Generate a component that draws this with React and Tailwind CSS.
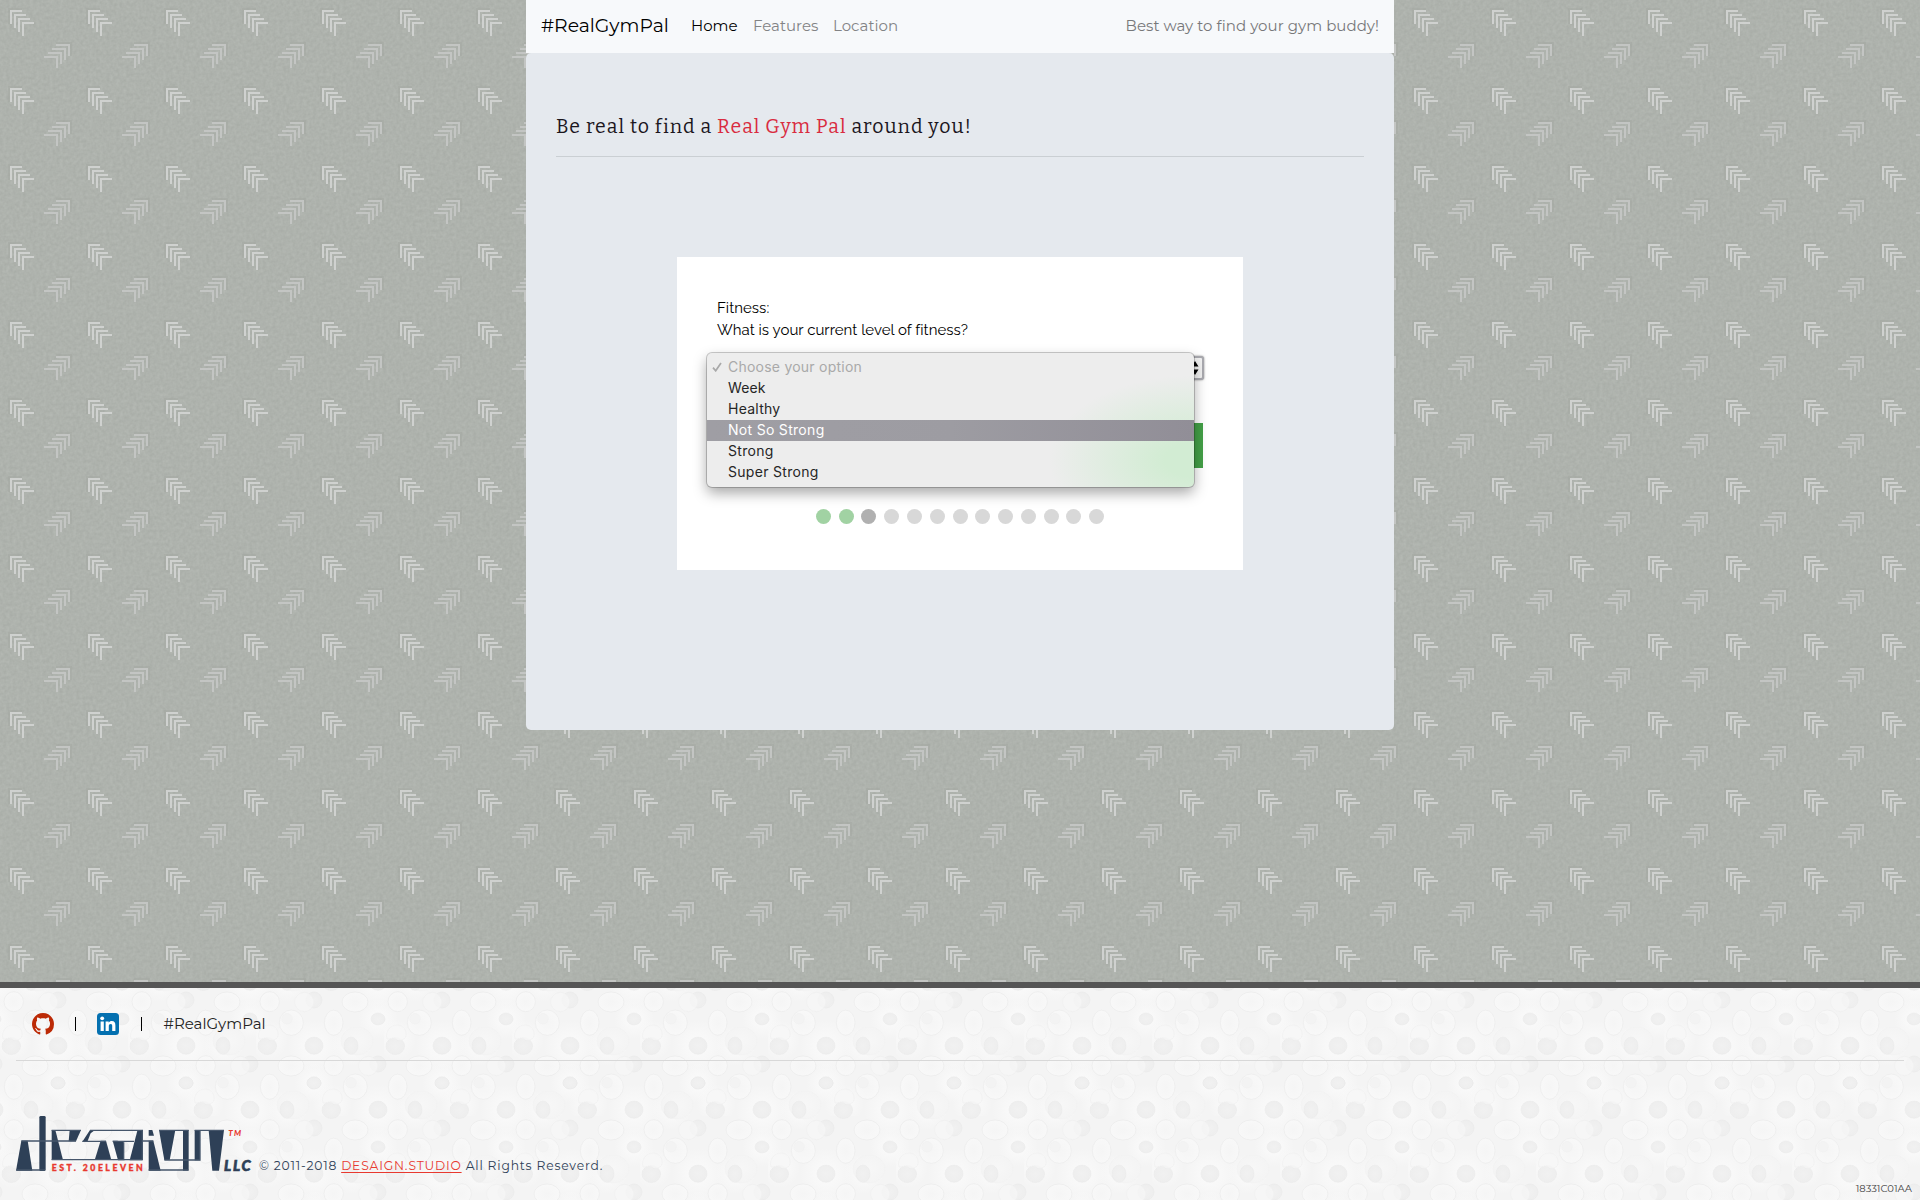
import React from "react";

const SANS = "font-['Montserrat','Inter',sans-serif]";

function PageTexture() {
  return (
    <svg className="absolute inset-0 h-full w-full" aria-hidden="true">
      <defs>
        <filter id="grain" x="0" y="0" width="100%" height="100%" colorInterpolationFilters="sRGB">
          <feTurbulence type="fractalNoise" baseFrequency="0.3" numOctaves="2" seed="4" />
          <feColorMatrix values="0.065 0 0 0 0.65  0.065 0 0 0 0.667  0.065 0 0 0 0.645  0 0 0 0 1" />
        </filter>
        <pattern id="arrows" width="78" height="78" patternUnits="userSpaceOnUse">
          <g fill="none" stroke="#a3a8a1" strokeOpacity="0.5" strokeWidth="2">
            <path d="M9 24V9H22" />
            <path d="M56 43H71V56" />
          </g>
          <g fill="none" stroke="#cfd1cf" strokeWidth="2">
            <path d="M11 24V11H22M15 28V15H26M19 32V19H30M23 36V23H34" />
          </g>
          <g fill="none" stroke="#c3c5c3" strokeWidth="2">
            <path d="M56 45H69V56M52 49H65V60M48 53H61V64M44 57H57V68" />
          </g>
        </pattern>
      </defs>
      <rect width="100%" height="100%" fill="#adb1ab" />
      <rect width="100%" height="100%" filter="url(#grain)" />
      <rect width="100%" height="100%" fill="url(#arrows)" />
    </svg>
  );
}

function Bubbles() {
  return (
    <>
      <ellipse cx="101" cy="53" rx="16" ry="14" fill="url(#soft)" stroke="#f2f2f2" strokeWidth="0.6" />
      <g fill="url(#light)" stroke="#ebebeb" strokeWidth="0.7">
        <ellipse cx="13.7" cy="13.7" rx="9.7" ry="10" />
        <ellipse cx="99" cy="14" rx="13" ry="10" />
        <ellipse cx="35.3" cy="34.7" rx="12" ry="12.7" />
        <ellipse cx="77.7" cy="34.7" rx="9.3" ry="12.6" />
      </g>
      <g fill="url(#dark)" stroke="#e9e9e9" strokeWidth="0.5">
        <circle cx="58" cy="12" r="8" />
        <ellipse cx="122" cy="31" rx="7" ry="6" />
        <ellipse cx="-6" cy="31" rx="7" ry="6" />
        <ellipse cx="11.3" cy="58" rx="9.3" ry="8.6" />
        <ellipse cx="58" cy="57.7" rx="9" ry="8.6" />
        <ellipse cx="95" cy="57.7" rx="7" ry="8.6" />
      </g>
      <circle cx="31" cy="30.7" r="5.3" fill="#f3f3f3" stroke="#efefef" strokeWidth="0.5" />
      <g fill="#f7f7f7" fillOpacity="0.7" stroke="#eeeeee" strokeWidth="0.6">
        <circle cx="48.3" cy="14" r="9.6" />
        <path d="M3 51c-2-7 3-14 10-14 6 0 10 5 9 11-1 4-7 6-10 3-3-2-6 0-9 0Z" />
      </g>
    </>
  );
}

function FooterTexture() {
  return (
    <svg className="absolute inset-0 h-full w-full" aria-hidden="true">
      <defs>
        <radialGradient id="light">
          <stop offset="0" stopColor="#f5f5f5" />
          <stop offset="1" stopColor="#f8f8f8" />
        </radialGradient>
        <radialGradient id="dark">
          <stop offset="0" stopColor="#f1f1f1" />
          <stop offset="1" stopColor="#eeeeee" />
        </radialGradient>
        <radialGradient id="soft">
          <stop offset="0" stopColor="#f7f7f7" />
          <stop offset="1" stopColor="#f4f4f4" />
        </radialGradient>
        <radialGradient id="glow">
          <stop offset="0.3" stopColor="#f9f9f9" />
          <stop offset="1" stopColor="#f9f9f9" stopOpacity="0" />
        </radialGradient>
        <pattern id="bubbles" width="128" height="128" patternUnits="userSpaceOnUse">
          <rect width="128" height="128" fill="#f4f4f4" />
          <g fill="url(#glow)">
            <circle cx="58" cy="58" r="26" />
            <circle cx="95" cy="58" r="20" />
            <circle cx="122" cy="31" r="20" />
            <circle cx="-6" cy="31" r="20" />
            <circle cx="58" cy="95" r="20" />
            <circle cx="122" cy="122" r="26" />
            <circle cx="-6" cy="122" r="26" />
            <circle cx="122" cy="-6" r="26" />
            <circle cx="-6" cy="-6" r="26" />
            <circle cx="31" cy="122" r="20" />
            <circle cx="31" cy="-6" r="20" />
            <circle cx="12" cy="52" r="20" />
            <circle cx="76" cy="116" r="20" />
          </g>
          <Bubbles />
          <g transform="translate(64 64)"><Bubbles /></g>
          <g transform="translate(-64 64)"><Bubbles /></g>
          <g transform="translate(64 -64)"><Bubbles /></g>
          <g transform="translate(-64 -64)"><Bubbles /></g>
        </pattern>
      </defs>
      <rect width="100%" height="100%" fill="url(#bubbles)" />
    </svg>
  );
}

function StudioLogo() {
  return (
    <svg width="240" height="59" viewBox="48 45 720 177" className="-mb-[2px] shrink-0" role="img" aria-label="desaign LLC">
      <g fill="#2e4057">
        <path d="M48 212 64 122H83L97 212Z" />
        <rect x="118" y="48" width="19" height="165" rx="4" />
        <path d="M155 90H166L189 180H155Z" />
        <path d="M209 90H243L228 124H206Z" />
        <path d="M247 125 270 90H285L272 100 262 125Z" />
        <path d="M302 122H318L334 180H284Z" />
        <path d="M338 122H352L371 127V177L374 181H354Z" />
        <path d="M412 92H427V181H389Z" />
        <path d="M446 90H457L462 107H446Z" />
        <path d="M446 122H460L482 212H446Z" />
        <path d="M477 90H526L509 180H493Z" />
        <rect x="549" y="90" width="17" height="122" />
        <rect x="584" y="90" width="16" height="91" />
        <path d="M626 90H672L657 212H637Z" />
      </g>
      <g fill="none" stroke="#46566b" strokeWidth="4">
        <path d="M64 123H228M50 210H135M155 91H243M155 179H188M270 91H427V179H156M247 124H318M338 124H402V124M371 127V177M427 123H460M446 210H565M477 91H566M493 180H600V91M584 91H672" />
      </g>
      <g fontFamily="Lato, sans-serif" fontWeight="900">
        <text x="155" y="213" fontSize="26" fill="#e8392f" stroke="#e8392f" textLength="273">EST. 20ELEVEN</text>
        <text x="685" y="108" fontSize="24" fontStyle="italic" fill="#e8392f" textLength="38">TM</text>
        <text x="672" y="212" fontSize="44" fontStyle="italic" fill="#2e4057" stroke="#2e4057" strokeWidth="2" textLength="80">LLC</text>
      </g>
    </svg>
  );
}

function GithubMark() {
  return (
    <svg width="22" height="22" viewBox="0 0 16 16" fill="#bc2a06" aria-hidden="true">
      <path d="M8 0C3.58 0 0 3.58 0 8c0 3.54 2.29 6.53 5.47 7.59.4.07.55-.17.55-.38 0-.19-.01-.82-.01-1.49-2.01.37-2.53-.49-2.69-.94-.09-.23-.48-.94-.82-1.13-.28-.15-.68-.52-.01-.53.63-.01 1.08.58 1.23.82.72 1.21 1.87.87 2.33.66.07-.52.28-.87.51-1.07-1.78-.2-3.64-.89-3.64-3.95 0-.87.31-1.59.82-2.15-.08-.2-.36-1.02.08-2.12 0 0 .67-.21 2.2.82.64-.18 1.32-.27 2-.27s1.36.09 2 .27c1.53-1.04 2.2-.82 2.2-.82.44 1.1.16 1.92.08 2.12.51.56.82 1.27.82 2.15 0 3.07-1.87 3.75-3.65 3.95.29.25.54.73.54 1.48 0 1.07-.01 1.93-.01 2.2 0 .21.15.46.55.38A8.01 8.01 0 0 0 16 8c0-4.42-3.58-8-8-8Z" />
    </svg>
  );
}

function LinkedinMark() {
  return (
    <svg width="22" height="22" viewBox="0 0 22 22" aria-hidden="true">
      <rect width="22" height="22" rx="3.5" fill="#0470b0" />
      <g fill="#fff">
        <circle cx="5.2" cy="5.3" r="1.9" />
        <path d="M3.6 8.4H6.8V18H3.6ZM8.6 8.4H11.7V9.7C12.3 8.7 13.4 8.1 14.8 8.1 17.5 8.1 18.4 9.8 18.4 12.5V18H15.2V13.1C15.2 11.8 14.9 10.9 13.7 10.9 12.4 10.9 11.8 11.8 11.8 13.1V18H8.6Z" />
      </g>
    </svg>
  );
}

const OPTIONS = [
  ["Week", "tracking-[0.1px]"],
  ["Healthy", "tracking-[0.25px]"],
  ["Not So Strong", "tracking-[0.3px]"],
  ["Strong", "tracking-[0.3px]"],
  ["Super Strong", "tracking-[0.3px]"],
];
const STEPS = Array.from({ length: 13 }, (_, i) => i);

function OptionMenu() {
  return (
    <div className="absolute left-[30px] top-[96px] z-10 w-[487px] overflow-hidden rounded-[5px] bg-[#ededed] bg-[radial-gradient(ellipse_145px_85px_at_100%_80%,#d2ecd3_20%,#ededed00_100%)] py-1 font-['Inter',sans-serif] text-[14px] leading-[19px] text-[#262626] shadow-[0_0_0_1px_rgba(0,0,0,0.2),0_6px_14px_rgba(0,0,0,0.35)]">
      <div className="flex h-[21px] items-start text-[#a9a9a9]">
        <svg width="10" height="10" viewBox="0 0 10 10" className="ml-[5px] mr-[6px] mt-[5px]" aria-hidden="true">
          <path d="M1 5.6 3.7 8.8 9 1" fill="none" stroke="#a9a9a9" strokeWidth="1.7" />
        </svg>
        <span className="tracking-[0.23px]">Choose your option</span>
      </div>
      {OPTIONS.map(([name, spacing]) => (
        <div
          key={name}
          className={`h-[21px] pl-[21px] ${spacing} ${name === "Not So Strong" ? "bg-gradient-to-r from-[#9f9ea4] via-[#9d9ca2] to-[#918e97] text-white" : ""}`}
        >
          {name}
        </div>
      ))}
    </div>
  );
}

function QuizCard() {
  return (
    <div className="relative mx-auto mt-[100px] h-[313px] w-[566px] bg-white px-10 pt-[40px]">
      <p className="font-['Raleway','Lato',sans-serif] text-[15px] leading-[22px] tracking-[0.03px] text-black">
        Fitness:
        <br />
        What is your current level of fitness?
      </p>
      <div className="mt-[15px] flex h-[24px] w-[487px] items-center justify-end rounded-[3px] border-[2px] border-[#aaaab0] bg-[#f3f3f3] pr-[3px] shadow-[0_0_2px_rgba(0,0,0,0.5)]">
        <svg width="8" height="16" viewBox="0 0 8 16" aria-hidden="true">
          <path d="M4 1 7.5 6.5H.5ZM4 15 .5 9.500H7.500Z" fill="#000" />
        </svg>
      </div>
      <div className="mt-[43px] h-[45px] w-[486px] bg-[#43a047]" />
      <div className="mt-[41px] flex justify-center gap-[7.8px]">
        {STEPS.map((i) => (
          <span
            key={i}
            className={`size-[15px] rounded-full ${i < 2 ? "bg-[#a1d2a3]" : i === 2 ? "bg-[#b0b0b0]" : "bg-[#d8d8d8]"}`}
          />
        ))}
      </div>
      <OptionMenu />
    </div>
  );
}

export default function App() {
  return (
    <div className={`flex h-[1200px] w-[1920px] flex-col overflow-hidden ${SANS}`}>
      <div className="relative h-[982px] shrink-0">
        <PageTexture />
        <div className="relative mx-auto w-[868px]">
          <nav className="flex h-[53px] items-center bg-[#f7f9fb] pb-px pl-[15px] pr-[15px] text-[15px]">
            <a className="w-[150px] text-[18.8px] text-black">#RealGymPal</a>
            <a className="w-[62px] text-black">Home</a>
            <a className="w-[80px] text-[#828385]">Features</a>
            <a className="text-[#828385]">Location</a>
            <span className="ml-auto tracking-[0.05px] text-[#77787a]">Best way to find your gym buddy!</span>
          </nav>
          <main className="h-[677px] rounded-[5px] bg-[#e5e9ee] px-[30px] pt-[60px]">
            <h1 className="h-[44px] whitespace-nowrap border-b border-[#cacfd3] font-['Bitter','DejaVu_Serif',serif] text-[19.5px] leading-[28px] tracking-[1px] text-[#1b161d]">
              Be real to find a <span className="text-[#d92b3f]">Real Gym Pal</span> around you!
            </h1>
            <QuizCard />
          </main>
        </div>
      </div>
      <footer className="relative h-[218px] border-t-[6px] border-[#555555]">
        <FooterTexture />
        <div className="relative flex h-full flex-col px-4">
          <div className="flex h-[73px] items-center border-b border-[#d8d8d8] pl-[15.500px]">
            <GithubMark />
            <span className="ml-[21.500px] h-[14px] w-px bg-black" />
            <span className="ml-[21px]"><LinkedinMark /></span>
            <span className="ml-[21.500px] h-[14px] w-px bg-black" />
            <a className="ml-[22px] text-[15px] text-[#222]">#RealGymPal</a>
          </div>
          <div className="mt-[54px] flex h-[57px] items-end">
            <StudioLogo />
            <p className="-mb-[2px] ml-[3px] whitespace-nowrap text-[12.3px] leading-[16px] tracking-[0.82px] text-[#2e4057]">
              © 2011-2018 <a className="text-[#e8392f] underline underline-offset-2">DESAIGN.STUDIO</a> All Rights Reseverd.
            </p>
          </div>
          <div className="-mr-2 mt-[10px] text-right text-[10px] leading-[14px] text-[#444]">18331C01AA</div>
        </div>
      </footer>
    </div>
  );
}
